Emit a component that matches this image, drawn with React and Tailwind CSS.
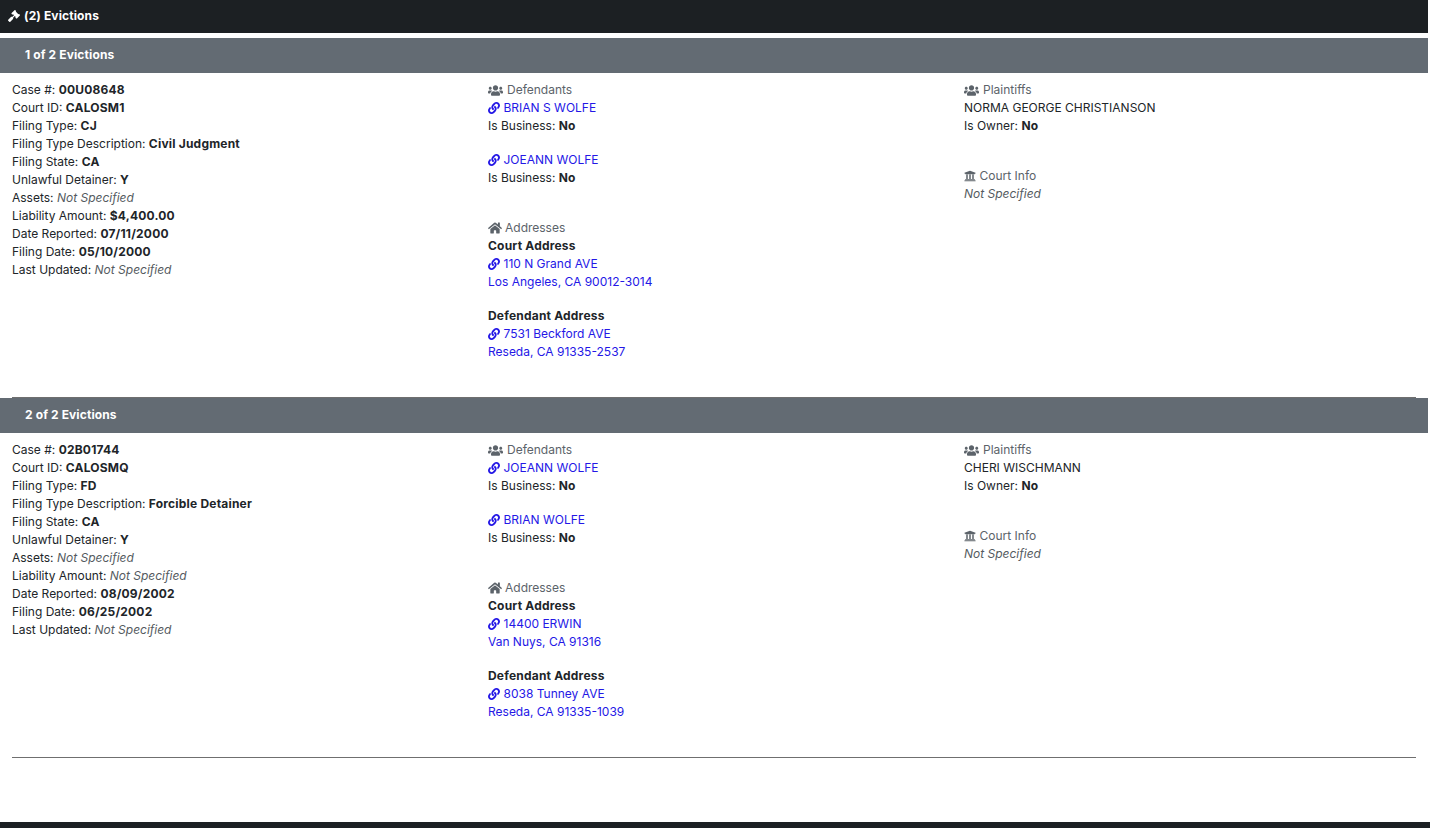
import React from "react";
import { FaGavel, FaUsers, FaLink, FaHome, FaUniversity } from "react-icons/fa";

const Not = () => <i className="text-[#555b61]">Not Specified</i>;
const Bold = ({ className = "", children }) => (
  <b className={`font-bold tracking-[0.2px] ${className}`}>{children}</b>
);
const Row = ({ label, value }) => (
  <div>
    {label}: {value === null ? <Not /> : <Bold>{value}</Bold>}
  </div>
);
const Head = ({ icon: Icon, children, size, gap }) => (
  <div className={`flex items-center ${gap} text-[#5c636a]`}>
    <Icon className={size} />
    <span>{children}</span>
  </div>
);
const Lnk = ({ children, icon }) => (
  <div className="flex items-center gap-[3.5px] text-[#2417e6]">
    {icon && <FaLink className="text-[12px]" />}
    <span>{children}</span>
  </div>
);

function Eviction({ n, fields, defendants, court, defendant, plaintiff }) {
  return (
    <section>
      <div className="h-[35px] mr-[2px] pb-[1px] bg-[#636b73] text-white font-bold tracking-[0.12px] flex items-center pl-[25px]">
        {n} of 2 Evictions
      </div>
      <div className="grid grid-cols-3 mr-[2px] pt-[8px]">
        <div className="px-3">
          {fields.map(([l, v]) => (
            <Row key={l} label={l} value={v} />
          ))}
        </div>
        <div className="px-3">
          <Head icon={FaUsers} size="text-[15px]" gap="gap-[4px]">Defendants</Head>
          {defendants.map((d, i) => (
            <div key={d} className={i === 1 ? "mt-[16px]" : ""}>
              <Lnk icon>{d}</Lnk>
              <Row label="Is Business" value="No" />
            </div>
          ))}
          <div className="mt-[32px]">
            <Head icon={FaHome} size="text-[14px]" gap="gap-[3px]">Addresses</Head>
          </div>
          <Bold className="block">Court Address</Bold>
          <Lnk icon>{court[0]}</Lnk>
          <Lnk>{court[1]}</Lnk>
          <Bold className="block mt-[16px]">Defendant Address</Bold>
          <Lnk icon>{defendant[0]}</Lnk>
          <Lnk>{defendant[1]}</Lnk>
        </div>
        <div className="px-3">
          <Head icon={FaUsers} size="text-[15px]" gap="gap-[4px]">Plaintiffs</Head>
          <div>{plaintiff}</div>
          <Row label="Is Owner" value="No" />
          <div className="mt-[32px]">
            <Head icon={FaUniversity} size="text-[12px]" gap="gap-[3.5px]">Court Info</Head>
          </div>
          <Not />
        </div>
      </div>
      <div className="mt-[36px] ml-3 mr-[14px] h-px bg-[#6f6f6f]" />
    </section>
  );
}

export default function App() {
  return (
    <div
      className="h-[828px] overflow-hidden bg-white text-[12px] leading-[18px] text-[#212529] flex flex-col"
      style={{ fontFamily: "Inter, 'Liberation Sans', sans-serif" }}
    >
      <div className="h-[33px] shrink-0 mr-[2px] pb-[1px] bg-[#1c2023] text-white font-bold tracking-[0.12px] flex items-center gap-[4px] pl-[8px]">
        <FaGavel className="text-[12px]" />
        <span>(2) Evictions</span>
      </div>
      <div className="h-[5px] shrink-0" />
      <Eviction
        n={1}
        fields={[
          ["Case #", "00U08648"],
          ["Court ID", "CALOSM1"],
          ["Filing Type", "CJ"],
          ["Filing Type Description", "Civil Judgment"],
          ["Filing State", "CA"],
          ["Unlawful Detainer", "Y"],
          ["Assets", null],
          ["Liability Amount", "$4,400.00"],
          ["Date Reported", "07/11/2000"],
          ["Filing Date", "05/10/2000"],
          ["Last Updated", null],
        ]}
        defendants={["BRIAN S WOLFE", "JOEANN WOLFE"]}
        court={["110 N Grand AVE", "Los Angeles, CA 90012-3014"]}
        defendant={["7531 Beckford AVE", "Reseda, CA 91335-2537"]}
        plaintiff="NORMA GEORGE CHRISTIANSON"
      />
      <Eviction
        n={2}
        fields={[
          ["Case #", "02B01744"],
          ["Court ID", "CALOSMQ"],
          ["Filing Type", "FD"],
          ["Filing Type Description", "Forcible Detainer"],
          ["Filing State", "CA"],
          ["Unlawful Detainer", "Y"],
          ["Assets", null],
          ["Liability Amount", null],
          ["Date Reported", "08/09/2002"],
          ["Filing Date", "06/25/2002"],
          ["Last Updated", null],
        ]}
        defendants={["JOEANN WOLFE", "BRIAN WOLFE"]}
        court={["14400 ERWIN", "Van Nuys, CA 91316"]}
        defendant={["8038 Tunney AVE", "Reseda, CA 91335-1039"]}
        plaintiff="CHERI WISCHMANN"
      />
      <div className="flex-1" />
      <div className="h-[6px] shrink-0 bg-[#1c2023]" />
    </div>
  );
}
